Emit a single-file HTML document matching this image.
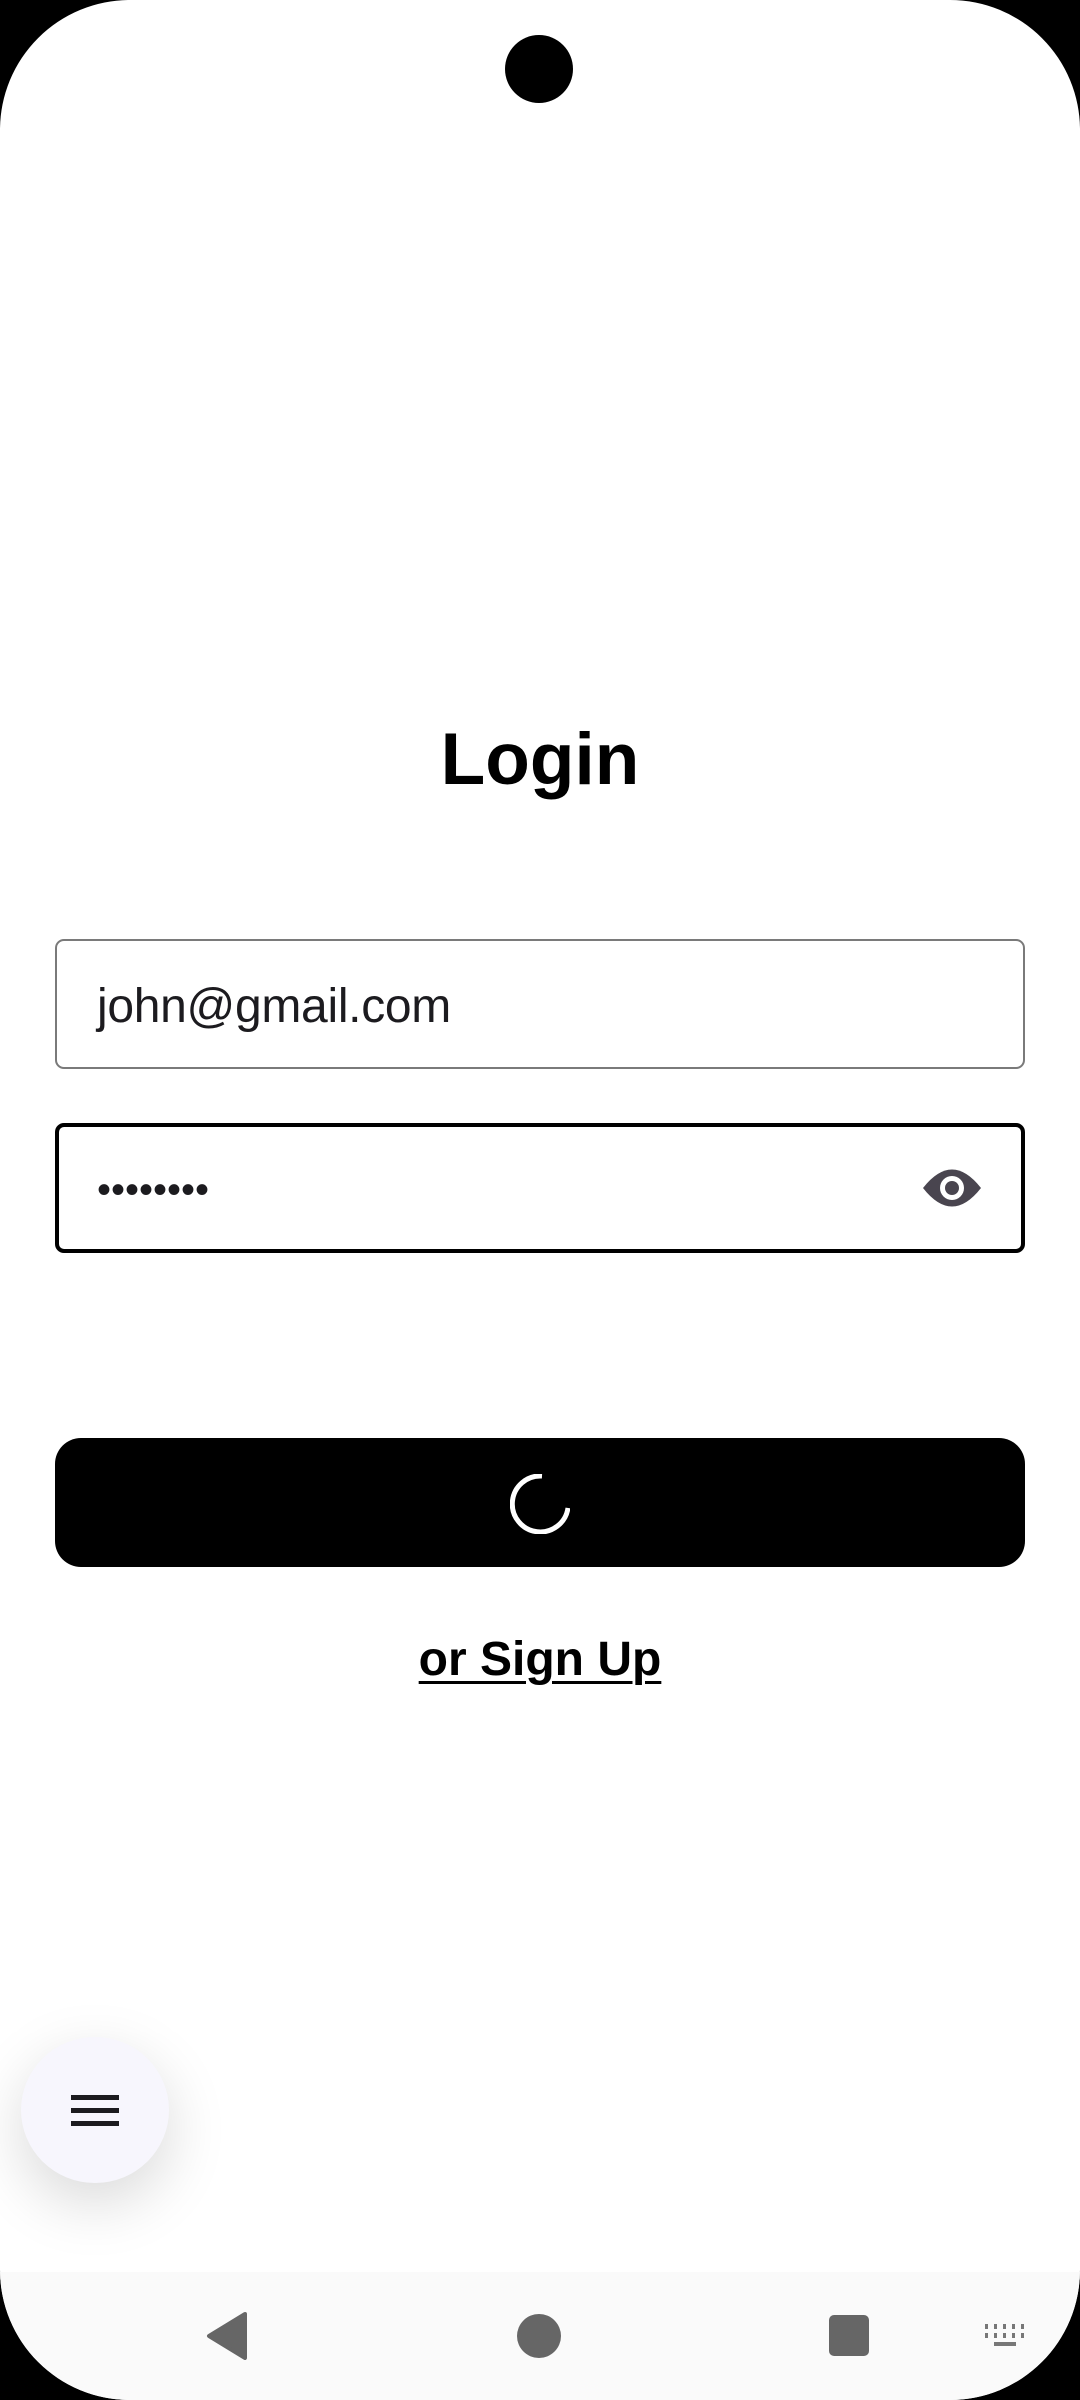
<!DOCTYPE html>
<html><head><meta charset="utf-8"><style>
html,body{margin:0;padding:0;background:#000;}
body{width:1080px;height:2400px;position:relative;overflow:hidden;font-family:"Liberation Sans",sans-serif;}
.screen{position:absolute;left:0;top:0;width:1080px;height:2400px;background:#fff;border-radius:130px;overflow:hidden;}
.cam{position:absolute;left:505px;top:35px;width:68px;height:68px;border-radius:50%;background:#000;}
.title{position:absolute;left:0;width:1080px;top:718px;text-align:center;font-weight:bold;font-size:73px;color:#000;}
.f1{position:absolute;left:55px;top:939px;width:966px;height:126px;border:2px solid #7a7a7a;border-radius:9px;}
.f1 span{position:absolute;left:40px;top:38px;font-size:48px;color:#1c1b1f;letter-spacing:-0.3px;}
.f2{position:absolute;left:55px;top:1123px;width:962px;height:122px;border:4px solid #000;border-radius:9px;}
.dots{position:absolute;left:38px;top:41px;font-size:40px;letter-spacing:0px;color:#1c1b1f;}
.btn{position:absolute;left:55px;top:1438px;width:970px;height:129px;background:#000;border-radius:26px;}
.su{position:absolute;left:0;width:1080px;top:1632px;text-align:center;font-weight:bold;font-size:48px;text-decoration:underline;text-decoration-thickness:3px;text-underline-offset:6px;color:#000;}
.fab{position:absolute;left:21px;top:2037px;width:148px;height:146px;border-radius:50%;background:#f7f6fd;box-shadow:0 20px 60px rgba(0,0,0,0.15);}
.nav{position:absolute;left:0;top:2272px;width:1080px;height:128px;background:#fafafa;}
</style></head><body>
<div class="screen">
<div class="cam"></div>
<div class="title">Login</div>
<div class="f1"><span>john@gmail.com</span></div>
<div class="f2"><div class="dots">••••••••</div>
<svg style="position:absolute;left:862px;top:38px" width="62" height="46" viewBox="0 0 62 46"><path d="M2 23 Q31 -14 60 23 Q31 60 2 23Z" fill="#49454f"/><circle cx="31" cy="23" r="12" fill="#fff"/><circle cx="31" cy="23" r="7" fill="#49454f"/></svg>
</div>
<div class="btn"><svg style="position:absolute;left:455px;top:36px" width="60" height="60" viewBox="0 0 60 60"><path d="M32 2 A28 28 0 1 0 58 34" fill="none" stroke="#fff" stroke-width="5"/></svg></div>
<div class="su">or Sign Up</div>
<div class="fab"><svg style="position:absolute;left:50px;top:50px" width="48" height="46" viewBox="0 0 48 46"><rect x="0" y="8" width="48" height="5" fill="#1c1b1f"/><rect x="0" y="21" width="48" height="5" fill="#1c1b1f"/><rect x="0" y="34" width="48" height="5" fill="#1c1b1f"/></svg></div>
<div class="nav">
<svg style="position:absolute;left:205px;top:40px" width="46" height="48" viewBox="0 0 46 48"><path d="M40 2 L4 24 L40 46 Z" fill="#666" stroke="#666" stroke-width="4" stroke-linejoin="round"/></svg>
<div style="position:absolute;left:517px;top:42px;width:44px;height:44px;border-radius:50%;background:#666"></div>
<div style="position:absolute;left:829px;top:43px;width:40px;height:41px;border-radius:5px;background:#666"></div>
<svg style="position:absolute;left:985px;top:52px" width="44" height="26" viewBox="0 0 44 26"><g fill="#777"><rect x="0" y="0" width="3" height="5"/><rect x="9" y="0" width="3" height="5"/><rect x="18" y="0" width="3" height="5"/><rect x="27" y="0" width="3" height="5"/><rect x="36" y="0" width="3" height="5"/><rect x="0" y="9" width="3" height="5"/><rect x="9" y="9" width="3" height="5"/><rect x="18" y="9" width="3" height="5"/><rect x="27" y="9" width="3" height="5"/><rect x="36" y="9" width="3" height="5"/><rect x="9" y="18" width="22" height="4"/></g></svg>
</div>
</div>
</body></html>
